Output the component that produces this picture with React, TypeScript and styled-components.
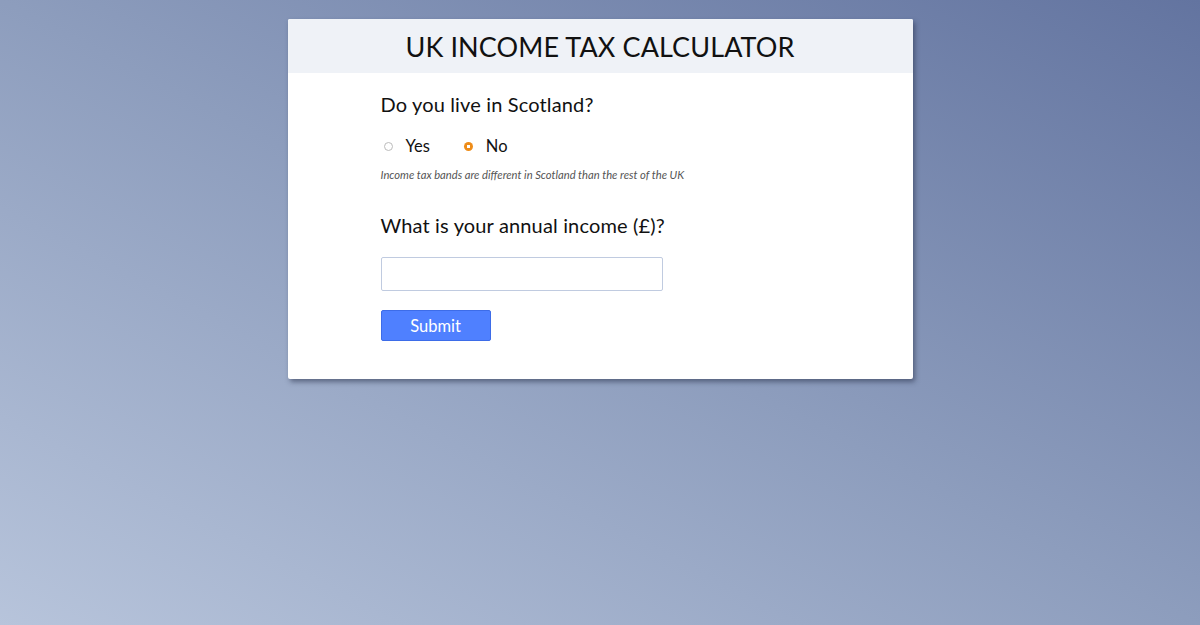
import React, { useState } from "react";
import styled, { createGlobalStyle } from "styled-components";

const GlobalStyle = createGlobalStyle`
  html, body {
    margin: 0;
    padding: 0;
    height: 100%;
  }
  body {
    font-family: Lato, "Open Sans", sans-serif;
    background: linear-gradient(to top right, #b7c4db 0%, #8d9dbd 50%, #6374a0 100%);
    background-attachment: fixed;
    min-height: 625px;
  }
`;

const App = () => {
  const [scotland, setScotland] = useState("no");
  const [income, setIncome] = useState("");

  return (
    <>
      <GlobalStyle />
      <Page>
        <Card>
          <Header>
            <Title>UK INCOME TAX CALCULATOR</Title>
          </Header>
          <Body onSubmit={(e) => e.preventDefault()}>
            <Question>Do you live in Scotland?</Question>
            <RadioRow>
              <RadioLabel>
                <Radio
                  type="radio"
                  name="scotland"
                  checked={scotland === "yes"}
                  onChange={() => setScotland("yes")}
                />
                Yes
              </RadioLabel>
              <RadioLabel>
                <Radio
                  type="radio"
                  name="scotland"
                  checked={scotland === "no"}
                  onChange={() => setScotland("no")}
                />
                No
              </RadioLabel>
            </RadioRow>
            <Note>Income tax bands are different in Scotland than the rest of the UK</Note>
            <Question $spaced>What is your annual income (£)?</Question>
            <IncomeInput value={income} onChange={(e) => setIncome(e.target.value)} />
            <SubmitButton type="submit">Submit</SubmitButton>
          </Body>
        </Card>
      </Page>
    </>
  );
};

export default App;

const Page = styled.div`
  display: flex;
  justify-content: center;
  padding-top: 19px;
`;

const Card = styled.div`
  width: 625px;
  background: #ffffff;
  border-radius: 2px;
  box-shadow: 2px 3px 5px rgba(40, 50, 75, 0.55);
  overflow: hidden;
`;

const Header = styled.div`
  height: 54px;
  background: #eff2f7;
  display: flex;
  align-items: center;
  justify-content: center;
`;

const Title = styled.h1`
  margin: 0;
  font-size: 27px;
  font-weight: 400;
  color: #111;
  letter-spacing: 0.1px;
`;

const Body = styled.form`
  display: flex;
  flex-direction: column;
  align-items: flex-start;
  padding: 18px 93px 38px;
`;

const Question = styled.h2<{ $spaced?: boolean }>`
  margin: ${(p) => (p.$spaced ? "31px" : "0")} 0 0;
  font-size: 20px;
  font-weight: 400;
  color: #111;
  line-height: 26px;
  letter-spacing: 0.15px;
`;

const RadioRow = styled.div`
  display: flex;
  gap: 31px;
  margin-top: 19px;
`;

const RadioLabel = styled.label`
  display: flex;
  align-items: center;
  font-size: 16.5px;
  color: #111;
  cursor: pointer;
`;

const Radio = styled.input`
  appearance: none;
  width: 9px;
  height: 9px;
  margin: 0 13px 0 3px;
  border-radius: 50%;
  border: 1px solid #bbb;
  background: #fff;
  box-sizing: border-box;
  &:checked {
    border: none;
    background: radial-gradient(circle, #ffffff 0 1.6px, #ee8c18 2px);
  }
`;

const Note = styled.p`
  margin: 12px 0 0;
  font-size: 11.2px;
  font-style: italic;
  color: #555;
`;

const IncomeInput = styled.input`
  margin-top: 19px;
  width: 282px;
  height: 34px;
  box-sizing: border-box;
  border: 1.5px solid #c0cbe0;
  border-radius: 2px;
  padding: 0 8px;
  font: inherit;
  font-size: 16px;
  outline: none;
`;

const SubmitButton = styled.button`
  margin-top: 19px;
  width: 110px;
  height: 31px;
  background: #4f80ff;
  border: 1px solid #3d6ce8;
  border-radius: 2px;
  color: #fff;
  font-family: inherit;
  font-size: 16.5px;
  cursor: pointer;
`;
